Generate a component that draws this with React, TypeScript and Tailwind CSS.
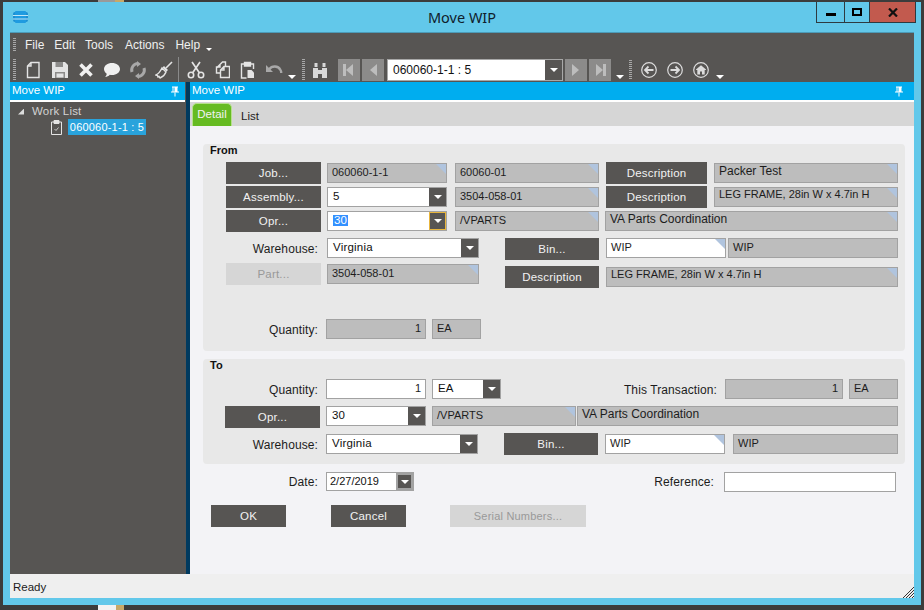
import type { ReactNode } from 'react'

const SANS = "font-['Liberation_Sans',Arial,sans-serif]"

function Corner() {
  return <span className="absolute right-0 top-0 h-[10px] w-[10px] bg-[#b0c4de] [clip-path:polygon(0_0,100%_0,100%_100%)]" />
}

function Caret({ className = '' }: { className?: string }) {
  return <span className={`h-0 w-0 border-x-[4px] border-t-[4px] border-x-transparent border-t-white ${className}`} />
}

function Btn({ children, className = '', disabled = false }: { children: ReactNode; className?: string; disabled?: boolean }) {
  return (
    <div
      className={`flex h-[22px] shrink-0 items-center justify-center pt-px tracking-[0.2px] ${
        disabled ? 'bg-[#d6d6d6] text-[#999999]' : 'bg-[#575553] text-[#f2f2f2]'
      } ${className}`}
    >
      {children}
    </div>
  )
}

function Field({
  children,
  className = '',
  corner = false,
  white = false,
  right = false,
}: {
  children?: ReactNode
  className?: string
  corner?: boolean
  white?: boolean
  right?: boolean
}) {
  return (
    <div
      className={`relative flex h-[20px] shrink-0 items-center border border-[#a2a2a2] px-[4px] pb-[1px] text-[11px] text-[#1c1c1c] ${
        white ? 'bg-white' : 'bg-[#bdbdbd]'
      } ${right ? 'justify-end' : ''} ${className}`}
    >
      {children}
      {corner && <Corner />}
    </div>
  )
}

function Combo({ children, className = '', focused = false }: { children: ReactNode; className?: string; focused?: boolean }) {
  return (
    <div className={`flex h-[20px] shrink-0 items-stretch border border-[#a2a2a2] bg-white tracking-[0.2px] text-[#111111] ${className}`}>
      <div className="flex min-w-0 flex-1 items-center pl-[5px] pb-[1px]">{children}</div>
      <div
        className={`flex w-[17px] items-center justify-center bg-[#575553] ${
          focused ? 'border border-[#e8b53c]' : ''
        }`}
      >
        <Caret />
      </div>
    </div>
  )
}

function Label({ children, className = '' }: { children: ReactNode; className?: string }) {
  return <div className={`shrink-0 text-right text-[12px] tracking-[0.1px] text-[#1c1c1c] ${className}`}>{children}</div>
}

function Grip({ className = '' }: { className?: string }) {
  return <div className={`w-[3px] shrink-0 bg-[repeating-linear-gradient(to_bottom,#a8a8a8_0,#a8a8a8_1px,transparent_1px,transparent_2px)] ${className}`} />
}

function Pin() {
  return (
    <svg width="10" height="11" viewBox="0 0 10 11" className="shrink-0">
      <path d="M2 0.5h6v1H7.500v4H9v1H1v-1h1.500v-4H2z M3.500 1.500v4h1v-4z" fill="#fff" fillRule="evenodd" />
      <path d="M4.500 6.500h1v4h-1z" fill="#fff" />
    </svg>
  )
}

function Icon({ children, w = 18 }: { children: ReactNode; w?: number }) {
  return (
    <svg width={w} height="18" viewBox={`0 0 ${w} 18`} className="shrink-0" fill="none" stroke="#e4e4e4" strokeWidth="1.4">
      {children}
    </svg>
  )
}

function NavBtn({ dir, last = false }: { dir: 'l' | 'r'; last?: boolean }) {
  return (
    <div className="flex h-[22px] w-[22px] shrink-0 items-center justify-center bg-[#8c8b8a]">
      <svg width="14" height="14" viewBox="0 0 14 14" fill="#bdbdbd">
        {dir === 'l' ? <path d="M11 1v12L4 7z" /> : <path d="M3 1v12l7-6z" />}
        {last && (dir === 'l' ? <path d="M1 1h3v12H1z" /> : <path d="M10 1h3v12h-3z" />)}
      </svg>
    </div>
  )
}

function CircleIcon({ children }: { children: ReactNode }) {
  return (
    <svg width="16" height="16" viewBox="0 0 16 16" className="shrink-0" fill="none" stroke="#dcdcdc" strokeWidth="1.2">
      <circle cx="8" cy="8" r="7.3" />
      {children}
    </svg>
  )
}

function Toolbar() {
  return (
    <div className="flex h-[25px] items-center text-[#111111]">
      <Grip className="ml-[3px] h-[21px]" />
      <div className="ml-[10px]">
        <Icon w={15}>
          <path d="M5 1.500h8v15H1.500V5z M5 1.500V5H1.500" />
        </Icon>
      </div>
      <div className="ml-[10px]">
        <Icon>
          <path d="M1 1h13l3 3v13H1z" fill="#e4e4e4" stroke="none" />
          <path d="M4.500 1h7.500v5H4.500z M4 11h10v6H4z" fill="#8c8b8a" stroke="none" />
          <path d="M5.500 12.500h7v4h-7z" fill="#e4e4e4" stroke="none" />
        </Icon>
      </div>
      <div className="ml-[9px]">
        <Icon w={16}>
          <path d="M2.500 3.500l11 11M13.500 3.500l-11 11" strokeWidth="3.6" stroke="#f0f0f0" />
        </Icon>
      </div>
      <div className="ml-[9px]">
        <Icon>
          <path d="M9 2c4.400 0 8 2.600 8 6s-3.600 6-8 6c-.8 0-1.500 0-2.200-.2C5.500 15.200 3.500 16.200 2 16c1-.8 1.600-2 1.700-3.300C2 11.500 1 9.800 1 8c0-3.400 3.600-6 8-6z" fill="#f0f0f0" stroke="none" />
        </Icon>
      </div>
      <div className="ml-[8px]">
        <Icon>
          <path d="M3 11A6.500 6.500 0 0 1 9 2.500" strokeWidth="3" stroke="#a8a8a8" />
          <path d="M15 7a6.500 6.500 0 0 1-6 8.500" strokeWidth="3" stroke="#a8a8a8" />
          <path d="M8 0l4 3-4 3zM10 12v6l-4-3z" fill="#a8a8a8" stroke="none" />
        </Icon>
      </div>
      <div className="ml-[8px]">
        <Icon>
          <path d="M17 1l-6 6" strokeWidth="1.6" />
          <path d="M9 5l4 4-1.500 1.500-4-4z" fill="#e4e4e4" stroke="none" />
          <path d="M7 7l4 4c-1 2.500-3.500 5-6 6l-1-1.500-1 .5-.5-1.500L1 14c2.500-1 4.500-4 6-7z" />
        </Icon>
      </div>
      <div className="ml-[5px] h-[25px] w-px bg-[#8a8a8a]" />
      <div className="ml-[8px]">
        <Icon>
          <circle cx="4" cy="14" r="2.700" strokeWidth="1.600" />
          <circle cx="14" cy="14" r="2.700" strokeWidth="1.600" />
          <path d="M5.500 12L13 1M12.500 12L5 1" strokeWidth="1.700" />
        </Icon>
      </div>
      <div className="ml-[10px]">
        <Icon w={15}>
          <path d="M5 3.500L7.500 1h3v4.500M1.500 7L5 3.500V6H1.500v6h4" />
          <path d="M9 5.500h5.500v11h-9V9z M9 5.500V9H5.500" />
        </Icon>
      </div>
      <div className="ml-[10px]">
        <Icon w={15}>
          <path d="M4.500 3H1.500v14h5M10.500 3h3v5" />
          <path d="M4.500 1.500h6V5h-6z" fill="#e4e4e4" />
          <path d="M7.500 9h4l2.500 2.500V17H7.500z" fill="#e4e4e4" stroke="none" />
        </Icon>
      </div>
      <div className="ml-[10px]">
        <Icon>
          <path d="M4 8.500C7 4.500 13 4.500 15.500 9c.6 1 .8 2 .7 3" strokeWidth="2.400" stroke="#a8a8a8" />
          <path d="M1 4v7h7z" fill="#a8a8a8" stroke="none" />
        </Icon>
      </div>
      <Caret className="ml-[5px] mt-[14px]" />
      <Grip className="ml-[6px] h-[21px]" />
      <div className="ml-[6px]">
        <Icon>
          <path d="M2 7h5v10H2zM11 7h5v10h-5zM7 9h4v4H7zM3.500 2h3v4h-3zM11.500 2h3v4h-3z" fill="#d8d8d8" stroke="none" />
        </Icon>
      </div>
      <div className="ml-[9px] flex items-center gap-[2px]">
        <NavBtn dir="l" last />
        <NavBtn dir="l" />
      </div>
      <div className="ml-[3px] flex h-[22px] w-[176px] shrink-0 items-stretch border border-[#a8a8a8] bg-white text-[12px]">
        <div className="flex flex-1 items-center pl-[5px]">060060-1-1 : 5</div>
        <div className="flex w-[17px] items-center justify-center bg-[#575553]">
          <Caret />
        </div>
      </div>
      <div className="ml-[2px] flex items-center gap-[2px]">
        <NavBtn dir="r" />
        <NavBtn dir="r" last />
      </div>
      <Caret className="ml-[5px] mt-[14px]" />
      <Grip className="ml-[5px] h-[20px]" />
      <div className="ml-[9px]">
        <CircleIcon>
          <path d="M12.500 8H4M7.500 4.500L4 8l3.500 3.500" strokeWidth="1.800" />
        </CircleIcon>
      </div>
      <div className="ml-[10px]">
        <CircleIcon>
          <path d="M3.500 8H12M8.500 4.500L12 8l-3.500 3.500" strokeWidth="1.800" />
        </CircleIcon>
      </div>
      <div className="ml-[10px]">
        <CircleIcon>
          <path d="M8 3.200L3 7.600V8h1.300v4.500h2.700V9.500h2v3h2.700V8H13v-.4z" fill="#dcdcdc" stroke="none" />
        </CircleIcon>
      </div>
      <Caret className="ml-[7px] mt-[14px]" />
    </div>
  )
}

function TitleBar() {
  return (
    <div className="relative flex h-[30px] items-center justify-center bg-[#62c8ea]">
      <svg width="15" height="12" viewBox="0 0 15 12" className="absolute left-[3px] top-[9px]">
        <rect x="0" y="1" width="15" height="10" rx="2" fill="#1b8fd2" />
        <rect x="2" y="0" width="11" height="12" rx="1" fill="#1f9be0" />
        <rect x="0" y="4" width="15" height="1" fill="#bfe6f6" />
        <rect x="0" y="7.500" width="15" height="1" fill="#bfe6f6" />
      </svg>
      <span className="font-['Noto_Sans',sans-serif] text-[14.5px] text-[#10202c]">Move WIP</span>
      <div className="absolute right-[-2px] top-0 flex h-[21px] border border-t-0 border-[#2e3a40]">
        <div className="flex w-[27px] items-end justify-center pb-[6px]">
          <span className="h-[3px] w-[10px] bg-black" />
        </div>
        <div className="flex w-[25px] items-center justify-center border-l border-[#2e3a40]">
          <span className="h-[8px] w-[10px] border-2 border-black" />
        </div>
        <div className="flex w-[46px] items-center justify-center border-l border-[#2e3a40] bg-[#c25a4e]">
          <svg width="10" height="9" viewBox="0 0 10 9">
            <path d="M1 .5l8 8M9 .5l-8 8" stroke="#111" strokeWidth="2.200" />
          </svg>
        </div>
      </div>
    </div>
  )
}

function LeftPanel() {
  return (
    <div className="flex w-[175px] shrink-0 flex-col bg-[#575553] text-[#e4e4e4]">
      <div className="flex h-[18px] items-center justify-between bg-[#00adef] pl-[2px] pr-[5px] text-white">
        <span>Move WIP</span>
        <Pin />
      </div>
      <div className="h-[2px] bg-white" />
      <div className="flex h-[17px] items-center pl-[8px] pt-[2px]">
        <span className="h-[6px] w-[6px] bg-[#dcdcdc] [clip-path:polygon(100%_0,100%_100%,0_100%)]" />
        <span className="ml-[8px] tracking-[0.2px] text-[#d2d2d2]">Work List</span>
      </div>
      <div className="flex h-[16px] items-center pl-[41px]">
        <svg width="11" height="15" viewBox="0 0 11 15" fill="none" stroke="#e4e4e4">
          <path d="M3 2H.5v12.500h10V2H8" />
          <path d="M3 .5h5v3H3z" fill="#e4e4e4" />
          <path d="M3.500 9l1.500 1.500L7.500 7.500" strokeWidth=".8" />
        </svg>
        <span className="ml-[6px] flex h-[16px] w-[78px] items-center justify-center bg-[#29a3dc] pt-px text-[11px] tracking-[0.2px] text-white">
          060060-1-1 : 5
        </span>
      </div>
    </div>
  )
}

function FromSection() {
  return (
    <div className="flex h-[207px] w-[702px] flex-col rounded-[4px] bg-[#e8e8e8] pl-[23px]">
      <div className="-ml-[16px] h-[18px] text-[11px] font-bold leading-[13px] text-[#111111]">From</div>
      <div className="flex h-[22px] items-center">
        <Btn className="w-[95px]">Job...</Btn>
        <Field corner className="ml-[6px] w-[120px]">060060-1-1</Field>
        <Field corner className="ml-[8px] w-[144px]">60060-01</Field>
        <Btn className="ml-[7px] w-[101px]">Description</Btn>
        <Field corner className="ml-[7px] w-[184px] !items-start pt-px">
          <span className="text-[12px]">Packer Test</span>
        </Field>
      </div>
      <div className="mt-[2px] flex h-[22px] items-center">
        <Btn className="w-[95px]">Assembly...</Btn>
        <Combo className="ml-[6px] w-[120px]">5</Combo>
        <Field corner className="ml-[8px] w-[144px]">3504-058-01</Field>
        <Btn className="ml-[7px] w-[101px]">Description</Btn>
        <Field corner className="ml-[7px] w-[184px] !items-start pt-px">LEG FRAME, 28in W x 4.7in H</Field>
      </div>
      <div className="mt-[2px] flex h-[22px] items-center">
        <Btn className="w-[95px]">Opr...</Btn>
        <Combo focused className="ml-[6px] w-[120px]">
          <span className="bg-[#3390ff] px-px text-white">30</span>
        </Combo>
        <Field corner className="ml-[8px] w-[144px]">/VPARTS</Field>
        <Field corner className="ml-[6px] w-[293px] !items-start pt-px">
          <span className="text-[12px]">VA Parts Coordination</span>
        </Field>
      </div>
      <div className="mt-[6px] flex h-[22px] items-start">
        <Label className="w-[92px] pt-px leading-[20px]">Warehouse:</Label>
        <Combo className="ml-[9px] w-[152px]">Virginia</Combo>
        <Btn className="ml-[26px] w-[94px]">Bin...</Btn>
        <Field corner white className="ml-[7px] w-[120px]">WIP</Field>
        <Field className="ml-[2px] w-[170px]">WIP</Field>
      </div>
      <div className="mt-[3px] flex h-[25px] items-start">
        <Btn disabled className="w-[95px]">Part...</Btn>
        <Field corner className="ml-[6px] mt-px w-[152px]">3504-058-01</Field>
        <Btn className="ml-[26px] mt-[3px] w-[94px]">Description</Btn>
        <Field corner className="ml-[7px] mt-[4px] w-[292px] !items-start pt-px">LEG FRAME, 28in W x 4.7in H</Field>
      </div>
      <div className="mt-[31px] flex h-[20px] items-center">
        <Label className="w-[92px] pt-px">Quantity:</Label>
        <Field right className="ml-[8px] w-[100px]">1</Field>
        <Field className="ml-[6px] w-[49px]">EA</Field>
      </div>
    </div>
  )
}

function ToSection() {
  return (
    <div className="mt-[8px] flex h-[105px] w-[702px] flex-col rounded-[4px] bg-[#e8e8e8] pl-[22px]">
      <div className="-ml-[15px] h-[20px] text-[11px] font-bold leading-[13px] text-[#111111]">To</div>
      <div className="flex h-[20px] items-center">
        <Label className="w-[93px] pt-[2px]">Quantity:</Label>
        <Field white right className="ml-[8px] w-[100px]">1</Field>
        <Combo className="ml-[6px] w-[69px]">EA</Combo>
        <Label className="ml-[116px] w-[100px] pt-[2px]">This Transaction:</Label>
        <Field right className="ml-[8px] w-[118px]">1</Field>
        <Field className="ml-[6px] w-[49px]">EA</Field>
      </div>
      <div className="mt-[7px] flex h-[22px] items-start">
        <Btn className="w-[95px]">Opr...</Btn>
        <Combo className="ml-[6px] w-[100px]">30</Combo>
        <Field corner className="ml-[6px] w-[144px]">/VPARTS</Field>
        <Field className="ml-px w-[321px] !items-start pt-px">
          <span className="text-[12px]">VA Parts Coordination</span>
        </Field>
      </div>
      <div className="mt-[5px] flex h-[22px] items-center">
        <Label className="w-[93px] pt-[2px]">Warehouse:</Label>
        <Combo className="ml-[8px] w-[152px]">Virginia</Combo>
        <Btn className="ml-[26px] w-[94px]">Bin...</Btn>
        <Field corner white className="ml-[7px] w-[120px]">WIP</Field>
        <Field className="ml-[8px] w-[165px]">WIP</Field>
      </div>
    </div>
  )
}

function DetailPanel() {
  return (
    <div className="flex min-w-0 flex-1 flex-col bg-[#f3f3f6]">
      <div className="flex h-[18px] items-center justify-between bg-[#00adef] pl-[2px] pr-[10px] text-white">
        <span>Move WIP</span>
        <Pin />
      </div>
      <div className="h-[2px] bg-white" />
      <div className="flex h-[24px] items-end bg-[#d6d6d6] pl-[2px]">
        <div className="flex h-[23px] w-[40px] items-center justify-center rounded-t-[5px] border border-b-0 border-[#b6e08c] bg-[#66bb22] text-[#f2f2f2]">
          Detail
        </div>
        <div className="ml-[9px] flex h-[22px] items-center pt-[3px] text-[#1c1c1c]">List</div>
      </div>
      <div className="flex flex-1 flex-col pl-[13px] pt-[18px]">
        <FromSection />
        <ToSection />
        <div className="mt-[7px] flex h-[21px] items-center">
          <Label className="w-[115px]">Date:</Label>
          <div className="ml-[8px] flex h-[19px] w-[88px] items-stretch border border-[#a2a2a2] bg-white text-[11px] text-[#111111]">
            <div className="flex flex-1 items-center pl-[3px]">2/27/2019</div>
            <div className="flex w-[17px] items-center justify-center border-2 border-[#a2a2a2] bg-[#575553]">
              <Caret />
            </div>
          </div>
          <Label className="ml-[240px] w-[60px]">Reference:</Label>
          <Field white className="ml-[10px] w-[172px]" />
        </div>
        <div className="mt-[13px] flex items-center pl-[8px]">
          <Btn className="w-[75px]">OK</Btn>
          <Btn className="ml-[45px] w-[75px]">Cancel</Btn>
          <Btn disabled className="ml-[44px] w-[136px] text-[11px]">Serial Numbers...</Btn>
        </div>
      </div>
    </div>
  )
}

export default function App() {
  return (
    <div className={`flex h-[610px] w-[924px] flex-col overflow-hidden bg-[#3c3c3c] text-[11.5px] leading-none ${SANS}`}>
      <div className="flex h-[2px] shrink-0 pl-[98px]">
        <span className="w-[17px] bg-[#9a9a9a]" />
        <span className="w-[9px] bg-[#c8a868]" />
      </div>
      <div className="ml-[3px] flex h-[603px] w-[918px] shrink-0 flex-col bg-[#62c8ea] px-[7px]">
        <TitleBar />
        <div className="w-[904px] border-t border-[#4c9bb8] bg-[#575553]">
          <div className="flex h-[24px] items-center text-[12px] text-[#f0f0f0]">
            <Grip className="ml-[3px] h-[14px]" />
            <span className="ml-[9px]">File</span>
            <span className="ml-[10px]">Edit</span>
            <span className="ml-[10px]">Tools</span>
            <span className="ml-[12px]">Actions</span>
            <span className="ml-[11px]">Help</span>
            <Caret className="ml-[6px] mt-[8px] !border-x-[3px] !border-t-[3px]" />
          </div>
          <Toolbar />
        </div>
        <div className="flex h-[492px] w-[904px]">
          <LeftPanel />
          <div className="w-[5px] shrink-0 border-l border-[#575553] bg-[#003a5f]" />
          <DetailPanel />
        </div>
        <div className="flex h-[24px] w-[904px] items-end justify-between bg-[#efefef]">
          <span className="mb-[5px] ml-[3px] text-[#1c1c1c]">Ready</span>
          <svg width="11" height="11" viewBox="0 0 11 11" stroke="#333" strokeWidth="1">
            <path d="M11 0L0 11M11 3L3 11M11 6L6 11M11 9L9 11" />
          </svg>
        </div>
      </div>
      <div className="flex h-[5px] shrink-0 pl-[98px]">
        <span className="w-[18px] bg-[#f2f2f2]" />
        <span className="w-[8px] bg-[#c8a868]" />
      </div>
    </div>
  )
}
